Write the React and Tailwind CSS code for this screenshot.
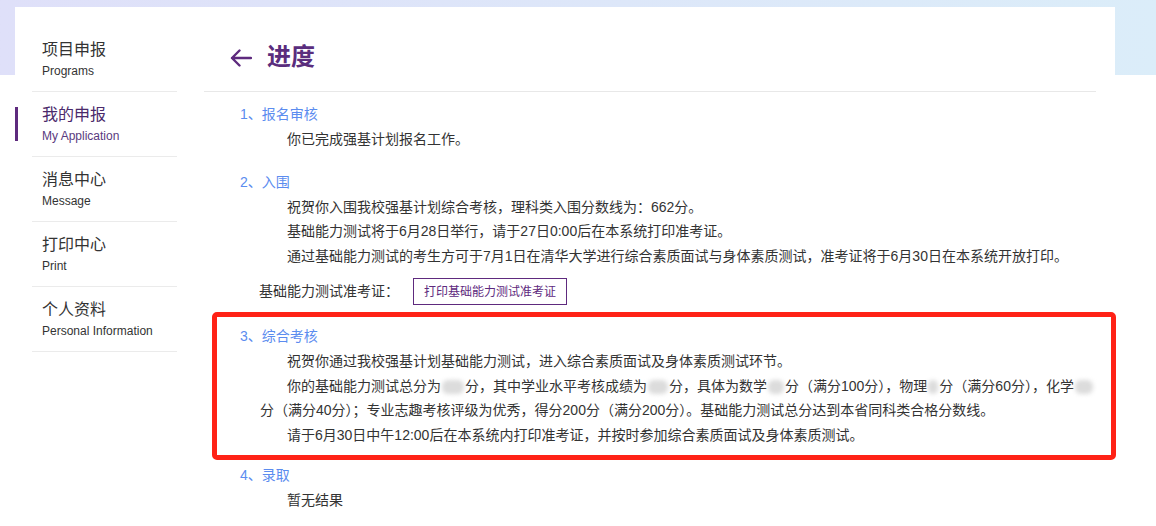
import React from "react";

const FONT = { fontFamily: '"Liberation Sans", "Noto Sans CJK SC", sans-serif' };

function Blur({ w }) {
  return (
    <span
      className="inline-block h-[14px] align-middle rounded-[6px] bg-[#dcdcdc] blur-[2px] mx-[1px]"
      style={{ width: w }}
    />
  );
}

const navItems = [
  { zh: "项目申报", en: "Programs" },
  { zh: "我的申报", en: "My Application", active: true },
  { zh: "消息中心", en: "Message" },
  { zh: "打印中心", en: "Print" },
  { zh: "个人资料", en: "Personal Information" },
];

function Heading({ children }) {
  return <div className="pl-[36px] text-[14px] leading-[24px] text-[#5b8cef]">{children}</div>;
}

function Line({ children, indent = true }) {
  return (
    <div
      className={
        "whitespace-nowrap text-[14px] leading-[24.5px] text-[#333] " +
        (indent ? "pl-[83px]" : "pl-[56px]")
      }
    >
      {children}
    </div>
  );
}

export default function App() {
  return (
    <div
      className="w-[1156px] h-[526px] overflow-hidden bg-white bg-linear-to-r from-[#dfe0f9] to-[#dbedf9] bg-no-repeat bg-[length:100%_75px] pl-[15px] pt-[7px]"
      style={FONT}
    >
      <div className="w-[1100px] h-[519px] bg-white flex">
        {/* Sidebar */}
        <div className="w-[189px] shrink-0 pl-[17px] pr-[27px] pt-[20px]">
          {navItems.map((it) => (
            <div key={it.zh} className="relative h-[65px] border-b border-[#ebebeb] pt-[13px] pl-[10px]">
              {it.active && (
                <div className="absolute left-[-17px] top-[15px] w-[3px] h-[34px] bg-[#5e2a7e]" />
              )}
              <div className={"text-[16px] leading-[20px] " + (it.active ? "text-[#4b2a6b]" : "text-[#333]")}>
                {it.zh}
              </div>
              <div className={"mt-[3px] text-[12px] leading-[16px] " + (it.active ? "text-[#5a3a7e]" : "text-[#333]")}>
                {it.en}
              </div>
            </div>
          ))}
        </div>

        {/* Main */}
        <div className="flex-1 pr-[19px]">
          <div className="h-[85px] border-b border-[#e8e8e8] pt-[34px] pl-[26px] flex items-start">
            <div className="h-[32px] flex items-center">
              <svg width="22" height="18" viewBox="0 0 22 18" fill="none" className="mt-[2px]">
                <path d="M21 9H2M9.5 1.5L2 9l7.5 7.5" stroke="#5e2a7e" strokeWidth="2.4" strokeLinecap="round" strokeLinejoin="round" />
              </svg>
              <span className="ml-[15px] text-[24px] leading-[32px] font-bold text-[#5a2d7d]">进度</span>
            </div>
          </div>

          <div className="pt-[10px]">
            {/* Section 1 */}
            <div>
              <Heading>1、报名审核</Heading>
              <div className="mt-[1px]">
                <Line>你已完成强基计划报名工作。</Line>
              </div>
            </div>

            {/* Section 2 */}
            <div className="mt-[18px]">
              <Heading>2、入围</Heading>
              <div className="mt-[1px]">
                <Line>祝贺你入围我校强基计划综合考核，理科类入围分数线为：662分。</Line>
                <Line>基础能力测试将于6月28日举行，请于27日0:00后在本系统打印准考证。</Line>
                <Line>通过基础能力测试的考生方可于7月1日在清华大学进行综合素质面试与身体素质测试，准考证将于6月30日在本系统开放打印。</Line>
              </div>
              <div className="mt-[10px] pl-[55px] flex items-center">
                <span className="text-[14px] text-[#333] w-[154px]">基础能力测试准考证：</span>
                <span className="h-[27px] px-[10px] border border-[#5e2a7e] flex items-center text-[12px] text-[#5e2a7e]">
                  打印基础能力测试准考证
                </span>
              </div>
            </div>

            {/* Section 3 */}
            <div className="relative mt-[19px]">
              <div className="absolute left-[8px] right-[-20px] top-[-12px] bottom-[-13px] border-[5px] border-[#ff2216] rounded-[5px] pointer-events-none" />
              <Heading>3、综合考核</Heading>
              <div className="mt-[1px]">
                <Line>祝贺你通过我校强基计划基础能力测试，进入综合素质面试及身体素质测试环节。</Line>
                <Line>
                  你的基础能力测试总分为<Blur w={22} />分，其中学业水平考核成绩为<Blur w={20} />分，具体为数学<Blur w={16} />分（满分100分），物理<Blur w={10} />分（满分60分），化学<Blur w={18} />
                </Line>
                <Line indent={false}>
                  分（满分40分）；专业志趣考核评级为优秀，得分200分（满分200分）。基础能力测试总分达到本省同科类合格分数线。
                </Line>
                <Line>请于6月30日中午12:00后在本系统内打印准考证，并按时参加综合素质面试及身体素质测试。</Line>
              </div>
            </div>

            {/* Section 4 */}
            <div className="mt-[16px]">
              <Heading>4、录取</Heading>
              <div className="mt-[1px]">
                <Line>暂无结果</Line>
              </div>
            </div>
          </div>
        </div>
      </div>
    </div>
  );
}
